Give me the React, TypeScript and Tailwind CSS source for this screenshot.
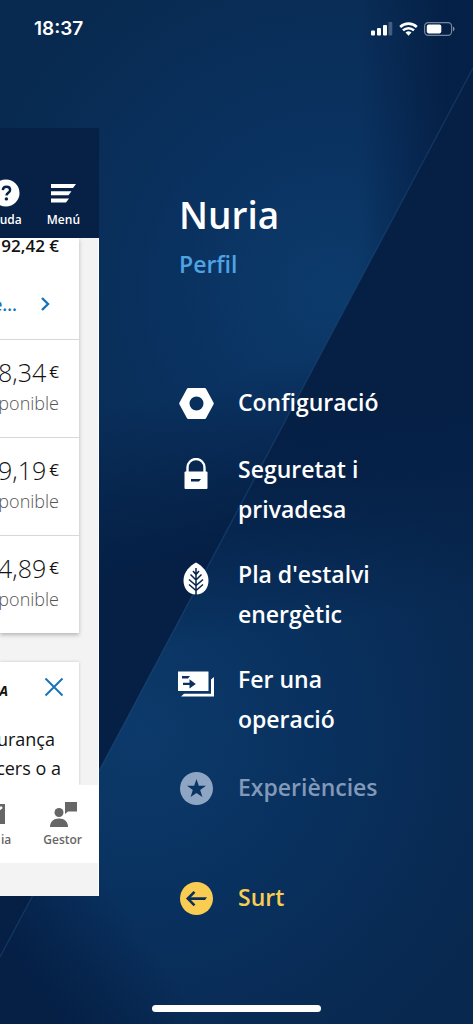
import type { ReactNode } from "react";

function Backdrop() {
  return (
    <svg
      className="absolute inset-0 h-full w-full"
      viewBox="0 0 473 1024"
      preserveAspectRatio="none"
      aria-hidden="true"
    >
      <defs>
        <radialGradient id="upper" gradientUnits="userSpaceOnUse" cx="330" cy="290" r="370">
          <stop offset="0" stopColor="#0c3b6b" />
          <stop offset="0.4" stopColor="#0a3261" />
          <stop offset="1" stopColor="#082a50" />
        </radialGradient>
        <linearGradient id="corner" gradientUnits="userSpaceOnUse" x1="360" y1="0" x2="445" y2="0">
          <stop offset="0" stopColor="#051f45" stopOpacity="0" />
          <stop offset="1" stopColor="#051f45" stopOpacity="0.9" />
        </linearGradient>
        <linearGradient id="fold" gradientUnits="userSpaceOnUse" x1="180" y1="390" x2="225" y2="550">
          <stop offset="0" stopColor="#051f45" stopOpacity="0" />
          <stop offset="1" stopColor="#051f45" stopOpacity="1" />
        </linearGradient>
        <radialGradient id="lower" gradientUnits="userSpaceOnUse" cx="140" cy="730" r="390">
          <stop offset="0" stopColor="#0c3a6a" />
          <stop offset="0.45" stopColor="#09315f" />
          <stop offset="1" stopColor="#08284f" />
        </radialGradient>
        <linearGradient id="lowerTop" gradientUnits="userSpaceOnUse" x1="330" y1="400" x2="360" y2="620">
          <stop offset="0" stopColor="#051f45" stopOpacity="1" />
          <stop offset="0.3" stopColor="#051f45" stopOpacity="0.85" />
          <stop offset="1" stopColor="#051f45" stopOpacity="0" />
        </linearGradient>
        <linearGradient id="lowerLeft" gradientUnits="userSpaceOnUse" x1="20" y1="970" x2="120" y2="900">
          <stop offset="0" stopColor="#051f45" stopOpacity="1" />
          <stop offset="1" stopColor="#051f45" stopOpacity="0" />
        </linearGradient>
      </defs>
      <path d="M0 0H473V68L0 957Z" fill="url(#upper)" />
      <path d="M0 0H473V68L0 957Z" fill="url(#corner)" />
      <path d="M0 0H473V68L0 957Z" fill="url(#fold)" />
      <path d="M473 68V1024H0V957Z" fill="url(#lower)" />
      <path d="M473 68V1024H0V957Z" fill="url(#lowerTop)" />
      <path d="M473 68V1024H0V957Z" fill="url(#lowerLeft)" />
      <path d="M473 68L0 957" stroke="#2a5f92" strokeOpacity="0.3" strokeWidth="1.5" />
    </svg>
  );
}

function StatusBar() {
  return (
    <header className="flex h-32 items-start justify-between pt-[15px] pr-[18px] pl-[34px]">
      <time className="font-['Inter',sans-serif] text-[19px] leading-7 font-semibold">18:37</time>
      <svg className="mt-[6px] h-4 w-[84px]" viewBox="0 0 84 16" fill="#fff" aria-hidden="true">
        <rect x="0" y="9.5" width="4" height="5" rx="1" />
        <rect x="6" y="7" width="4" height="7.5" rx="1" />
        <rect x="12" y="4" width="4" height="10.5" rx="1" />
        <rect x="17.5" y="1" width="3.8" height="13.5" rx="1" opacity="0.25" />
        <path d="M37.5 14.8l3-3.2a4.3 4.3 0 0 0-6 0z" />
        <g fill="none" stroke="#fff" strokeWidth="2.6">
          <path d="M32 9.4a8 8 0 0 1 11 0" />
          <path d="M29.2 6a12 12 0 0 1 16.6 0" />
        </g>
        <rect x="53.6" y="1.6" width="27" height="12.8" rx="3.6" fill="none" stroke="#fff" strokeOpacity="0.45" strokeWidth="1.2" />
        <rect x="55.8" y="3.6" width="14.5" height="8.8" rx="1.8" />
        <path d="M82 5.8c2 .6 2 3.8 0 4.4z" opacity="0.5" />
      </svg>
    </header>
  );
}

function BalanceRow({ amount }: { amount: string }) {
  return (
    <li className="flex h-[98px] flex-col items-end border-t border-[#d8d8d8] pt-[17px] pr-5 whitespace-nowrap">
      <span className="flex items-center gap-[3px] text-[25px] leading-[30px] font-light text-[#121212]">
        {amount}
        <span className="text-[17px] font-normal">€</span>
      </span>
      <span className="text-lg leading-8 font-light text-[#555]">ponible</span>
    </li>
  );
}

function AccountPeek() {
  return (
    <section
      aria-label="Posició global"
      className="flex w-[99px] shrink-0 flex-col overflow-hidden bg-[#f3f3f3] text-[#121212]"
    >
      <div className="flex h-[110px] items-end justify-end gap-[25px] bg-[#062046] pr-[19px] pb-[9px] text-xs leading-[18px] font-semibold text-white">
        <button type="button" className="flex flex-col items-end gap-1">
          <svg className="mr-[2px] h-7 w-7" viewBox="0 0 28 28" aria-hidden="true">
            <circle cx="14" cy="14" r="13.5" fill="#fff" />
            <path d="M10.8 11.2c.2-2.2 1.7-3.4 3.7-3.4 2.2 0 3.6 1.2 3.6 3.1 0 2.9-3.6 2.9-3.6 5.7" fill="none" stroke="#062046" strokeWidth="2.4" />
            <circle cx="14.4" cy="19.9" r="1.7" fill="#062046" />
          </svg>
          uda
        </button>
        <button type="button" className="flex flex-col items-center gap-1">
          <svg className="h-7 w-7" viewBox="0 0 28 28" fill="#fff" aria-hidden="true">
            <path d="M2 5h25l-3 4H2zM2 12.2h20.5l-3 4H2zM2 19.4h18l-3 4H2z" />
          </svg>
          Menú
        </button>
      </div>

      <div className="flex flex-col border-r border-white">
        <ul className="mr-[19px] bg-white shadow-[0_2px_4px_rgba(0,0,0,0.25)]">
          <li className="flex h-[101px] flex-col items-end whitespace-nowrap">
            <span className="pr-5 text-[17px] leading-4 font-semibold">92,42 €</span>
            <button type="button" className="mt-[36px] flex items-center gap-6 pr-[29px] text-lg leading-7 font-semibold text-[#1973b8]">
              e…
              <svg className="h-[14px] w-[9px]" viewBox="0 0 9 14" fill="none" stroke="#1973b8" strokeWidth="2.4" aria-hidden="true">
                <path d="M1 1l6 6-6 6" />
              </svg>
            </button>
          </li>
          <BalanceRow amount="8,34" />
          <BalanceRow amount="9,19" />
          <BalanceRow amount="4,89" />
        </ul>

        <article className="mt-[29px] mr-[19px] h-[123px] bg-white shadow-[0_0_3px_rgba(0,0,0,0.18)]">
          <div className="flex items-start justify-end gap-[36px] pt-[15px] pr-[15px]">
            <h2 className="pt-1 text-sm leading-5 font-bold whitespace-nowrap italic">A</h2>
            <button type="button" aria-label="Tanca">
              <svg className="h-5 w-5" viewBox="0 0 20 20" fill="none" stroke="#1973b8" strokeWidth="2" aria-hidden="true">
                <path d="M1.5 1.5l17 17M18.5 1.5l-17 17" />
              </svg>
            </button>
          </div>
          <p className="mt-6 flex flex-col items-end text-lg leading-[29px] whitespace-nowrap">
            <span className="pr-6">urança</span>
            <span className="pr-[18px]">cers o a</span>
          </p>
        </article>

        <nav aria-label="Navegació inferior" className="flex h-[78px] items-start justify-end gap-8 bg-white pt-4 pr-4 text-xs leading-[18px] font-semibold text-[#666]">
          <a href="#missatgeria" className="flex flex-col items-end gap-1">
            <svg className="mr-[6px] h-[26px] w-7" viewBox="0 0 28 26" aria-hidden="true">
              <rect x="2" y="3" width="26" height="20" fill="#666" />
              <path d="M5 6l10 8 10-8" fill="none" stroke="#fff" strokeWidth="2.5" />
            </svg>
            ia
          </a>
          <a href="#gestor" className="flex flex-col items-center gap-1">
            <svg className="h-[26px] w-7" viewBox="0 0 28 26" fill="#666" aria-hidden="true">
              <circle cx="10" cy="11.5" r="4.5" />
              <path d="M1 26c0-5.600 3.500-8.600 9-8.600s9 3 9 8.600z" />
              <path d="M16 1h12v9.500h-9L16 13z" />
            </svg>
            Gestor
          </a>
        </nav>
        <div className="h-[33px]" />
      </div>
    </section>
  );
}

function MenuItem({ href, icon, children, className = "" }: { href: string; icon: ReactNode; children: ReactNode; className?: string }) {
  return (
    <li>
      <a href={href} className={`flex gap-[25px] ${className}`}>
        <span className="flex h-[49px] w-[34px] shrink-0 items-center justify-center">{icon}</span>
        <span className="flex min-h-[49px] max-w-[150px] items-center pb-1 text-[23px] leading-10 font-semibold">{children}</span>
      </a>
    </li>
  );
}

const hexNut = (
  <svg className="h-[35px] w-[35px] shrink-0" viewBox="0 0 35 35" aria-hidden="true">
    <path fill="#fff" fillRule="evenodd" d="M9.2 2h16.6q.8 0 1.2.7l7.600 14q.4.8 0 1.600l-7.600 14q-.4.7-1.2.7H9.200q-.8 0-1.200-.7L.4 18.300q-.4-.8 0-1.600L8 2.700Q8.400 2 9.200 2zM17.500 10.500a7 7 0 1 0 0 14 7 7 0 1 0 0-14z" />
  </svg>
);

const padlock = (
  <svg className="h-[32px] w-6" viewBox="0 0 24 32" aria-hidden="true">
    <path d="M3.500 15V9.500a8.500 8.500 0 0 1 17 0V15" fill="none" stroke="#fff" strokeWidth="2.4" />
    <rect x="0.5" y="13.5" width="23" height="17.5" rx="1" fill="#fff" />
    <path d="M7 21h10l-2 2.500H7z" fill="#072750" />
  </svg>
);

const leaf = (
  <svg className="h-[34px] w-[26px]" viewBox="0 0 26 34" aria-hidden="true">
    <path d="M13 .5C18.500 3.500 25.500 9.500 25.500 18.500c0 8-5 14-12.500 14S.5 26.500.5 18.500C.5 9.500 7.500 3.500 13 .5z" fill="#fff" />
    <path d="M13 6v28M10 9l3 3.500L16 9M7.500 12.500l5.500 5.500 5.500-5.500M6 17.500l7 6 7-6M6 22.500l7 6 7-6" fill="none" stroke="#06234a" strokeWidth="1.5" />
  </svg>
);

const banknotes = (
  <svg className="h-[26px] w-[36px] shrink-0" viewBox="0 0 36 26" aria-hidden="true">
    <path d="M0 .5h30.500V20H0z" fill="#fff" />
    <path d="M36 6v19.500H3l3-2.700h27V8.500z" fill="#fff" />
    <path d="M4 5h8l-2 2.400H4zM5 11.800h6.500V8.200l6.300 4.700-6.300 4.600v-3.600H5z" fill="#0a315f" />
  </svg>
);

const starBadge = (
  <svg className="h-[33px] w-[33px]" viewBox="0 0 33 33" aria-hidden="true">
    <circle cx="16.5" cy="16.5" r="16.5" fill="#8ea6c3" />
    <path d="M16.500 7l2.300 6.800h7.200l-5.800 4.300 2.200 7-5.900-4.200-5.900 4.200 2.200-7L7 13.800h7.200z" fill="#0a3462" />
  </svg>
);

const exitBadge = (
  <svg className="h-[33px] w-[33px]" viewBox="0 0 33 33" aria-hidden="true">
    <circle cx="16.5" cy="16.5" r="16.5" fill="#f8cd51" />
    <path d="M7.500 15.300H27l-2 2.600H7.500z" fill="#0a2f5b" />
    <path d="M14.500 9.800l-6.700 6.800 6.700 6.800" fill="none" stroke="#0a2f5b" strokeWidth="2.6" />
  </svg>
);

export default function App() {
  return (
    <div className="relative isolate flex min-h-screen flex-col overflow-hidden bg-[#082a52] font-['Open_Sans',sans-serif] text-white">
      <div className="absolute inset-0 -z-10">
        <Backdrop />
      </div>
      <StatusBar />
      <main className="flex items-start">
        <AccountPeek />
        <div className="min-w-0 flex-1 pt-[62px] pl-20">
          <h1 className="text-[37px] leading-[50px] font-semibold">Nuria</h1>
          <a href="#perfil" className="mt-[9px] block text-[23px] leading-[30px] font-semibold text-[#4fa3e3]">
            Perfil
          </a>
          <ul className="mt-[100px] flex flex-col gap-[21px]">
            <MenuItem href="#configuracio" icon={hexNut}>Configuració</MenuItem>
            <MenuItem href="#seguretat" icon={padlock}>Seguretat i privadesa</MenuItem>
            <MenuItem href="#estalvi" icon={leaf}>Pla d'estalvi energètic</MenuItem>
            <MenuItem href="#operacio" icon={banknotes}>Fer una operació</MenuItem>
            <MenuItem href="#experiencies" icon={starBadge} className="text-[#8299b8]">Experiències</MenuItem>
            <MenuItem href="#surt" icon={exitBadge} className="mt-10 text-[#f8cd51]">Surt</MenuItem>
          </ul>
        </div>
      </main>
      <div className="mx-auto mt-auto mb-3 h-[7px] w-[169px] rounded-full bg-white" />
    </div>
  );
}
